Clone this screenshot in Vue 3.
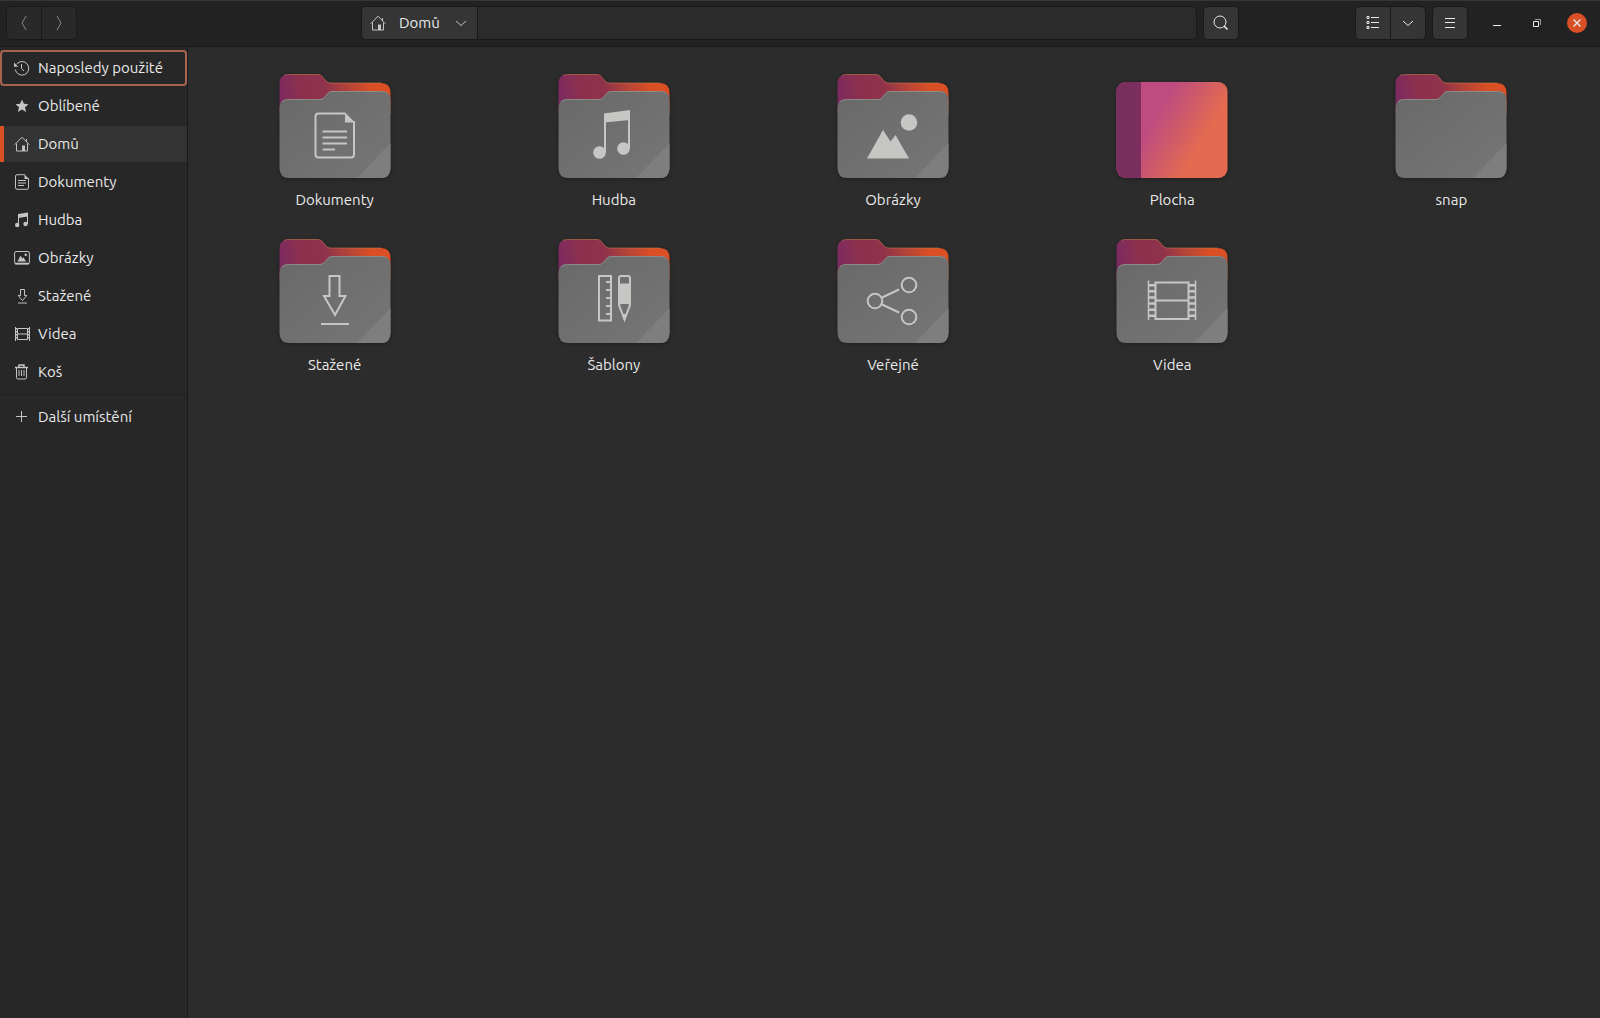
<template>
  <div class="window">
    <header class="headerbar">
      <div class="linked">
        <button class="btn dim" type="button" aria-label="Zpět">
          <svg width="16" height="16" viewBox="0 0 16 16"><path d="M10 1 6 8l4 7" /></svg>
        </button>
        <button class="btn dim" type="button" aria-label="Vpřed">
          <svg width="16" height="16" viewBox="0 0 16 16"><path d="M6 1l4 7-4 7" /></svg>
        </button>
      </div>

      <div class="location">
        <div class="pathbar">
          <button class="crumb" type="button">
            <svg width="16" height="16" viewBox="0 0 16 16" v-html="icons.home"></svg>
            <span>Domů</span>
            <svg width="16" height="16" viewBox="0 0 16 16"><path d="M3 6l5 4.500 5-4.500" /></svg>
          </button>
        </div>
        <button class="btn single" type="button" aria-label="Hledat">
          <svg width="16" height="16" viewBox="0 0 16 16">
            <circle cx="7" cy="7" r="6" />
            <path d="M11 11 14.500 14.500" stroke-width="1.6" />
          </svg>
        </button>
      </div>

      <div class="actions">
        <div class="linked">
          <button class="btn" type="button" aria-label="Seznam">
            <svg width="16" height="16" viewBox="0 0 16 16">
              <path d="M6 2.500h8M6 7.500h8M6 12.500h8" />
              <path d="M2 1.500h2v2H2zM2 6.500h2v2H2zM2 11.500h2v2H2z" />
            </svg>
          </button>
          <button class="btn" type="button" aria-label="Možnosti zobrazení">
            <svg width="16" height="16" viewBox="0 0 16 16"><path d="M3 6l5 4.500 5-4.500" /></svg>
          </button>
        </div>
        <button class="btn single" type="button" aria-label="Nabídka">
          <svg width="16" height="16" viewBox="0 0 16 16"><path d="M3 3.500h10M3 7.500h10M3 12.500h10" /></svg>
        </button>
        <div class="controls">
          <button class="control" type="button" aria-label="Minimalizovat">
            <svg width="16" height="16" viewBox="0 0 16 16"><path d="M4 10.500h8" /></svg>
          </button>
          <button class="control" type="button" aria-label="Obnovit">
            <svg width="16" height="16" viewBox="0 0 16 16">
              <path d="M4.500 6.500h5v5h-5z" />
              <path d="M6 4.500h5.500V10" opacity="0.6" />
            </svg>
          </button>
          <button class="control close" type="button" aria-label="Zavřít">
            <svg width="16" height="16" viewBox="0 0 16 16"><path d="M4.500 4.500l7 7M11.500 4.500l-7 7" stroke-width="1.4" /></svg>
          </button>
        </div>
      </div>
    </header>

    <div class="body">
      <nav class="sidebar">
        <a
          v-for="place in places"
          :key="place.label"
          href="#"
          :class="['place', { focused: place.focused, active: place.active }]"
        >
          <svg width="16" height="16" viewBox="0 0 16 16" v-html="icons[place.icon]"></svg>
          <span>{{ place.label }}</span>
        </a>
        <hr class="separator" />
        <a class="place" href="#">
          <svg width="16" height="16" viewBox="0 0 16 16"><path d="M7.500 2v11M2 7.500h11" /></svg>
          <span>Další umístění</span>
        </a>
      </nav>

      <main class="files">
        <a v-for="item in items" :key="item.label" class="file" href="#">
          <svg class="folder" width="112" height="104" viewBox="0 0 112 104">
            <g v-if="item.desktop">
              <rect x="0.500" y="8" width="111" height="96" rx="9" fill="url(#desk)" />
              <path d="M25 8H9.500a9 9 0 0 0-9 9v78a9 9 0 0 0 9 9H25z" fill="#7b2f5e" />
            </g>
            <g v-else>
              <path
                d="M.5 40V9.500Q.5.500 9.500.500H39q2.500 0 4 1.700l4 4.800q2 2 4.500 2H102q9.500 0 9.500 10v21z"
                fill="url(#back)"
              />
              <path d="M5 1.500q2-1 4.500-1H39q2.500 0 4 1.700l4 4.800q2 2 4.500 2H102" stroke="#c9784f" opacity="0.6" fill="none" />
              <path
                d="M.5 34q0-9 9-9H41q2.500 0 4.200-1.800l3.600-4.200q1.800-2 4.200-2h49q9.500 0 9.500 9v68q0 10-10 10H10.500q-10 0-10-10z"
                fill="url(#front)"
              />
              <path d="M111.500 69v25q0 10-10 10H78z" fill="#7e7e7e" />
              <path d="M3 28q2.500-2.500 6.500-2.500H41q2.500 0 4.200-1.800l3.600-4.200q1.800-2 4.200-2h49q4 0 6.500 2" stroke="#8e8a86" fill="none" />
            </g>
            <g v-if="item.emblem" class="emblem" v-html="emblems[item.emblem]"></g>
          </svg>
          <span class="name">{{ item.label }}</span>
        </a>
      </main>
    </div>

    <svg class="defs" width="0" height="0" aria-hidden="true">
      <defs>
        <linearGradient id="back" gradientUnits="userSpaceOnUse" x1="0" y1="24" x2="112" y2="4">
          <stop offset="0" stop-color="#7a2a62" />
          <stop offset="0.2" stop-color="#8c304e" />
          <stop offset="0.42" stop-color="#8f324b" />
          <stop offset="0.62" stop-color="#b54438" />
          <stop offset="0.82" stop-color="#da4f24" />
          <stop offset="1" stop-color="#da4f24" />
        </linearGradient>
        <linearGradient id="front" x1="0" y1="0" x2="1" y2="1">
          <stop offset="0" stop-color="#696969" />
          <stop offset="1" stop-color="#767676" />
        </linearGradient>
        <linearGradient id="desk" gradientUnits="userSpaceOnUse" x1="34" y1="38" x2="92" y2="72">
          <stop offset="0.1" stop-color="#be4c80" />
          <stop offset="0.5" stop-color="#cf5b68" />
          <stop offset="0.9" stop-color="#e46b50" />
        </linearGradient>
      </defs>
    </svg>
  </div>
</template>

<script setup>
// 16px symbolic icons, stroked by default
const icons = {
  recent:
    '<path d="M2.600 4.200A6.800 6.800 0 1 1 1.300 9.500"/><path d="M7.500 4v4.500l2.500 2.500"/><path class="solid" d="M0 2.500v4.200h4.200z"/>',
  star: '<path class="solid" d="M8 1.500l1.900 4.300 4.600.4-3.500 3.100 1.100 4.600L8 11.500l-4.100 2.400L5 9.300 1.500 6.200l4.600-.4z"/>',
  home: '<path d="M.700 8.700 8 1.200l7.300 7.500M2.500 7.500v7.500h11V7.500M12.500 3v3"/><path class="solid" d="M8 9.500h3V15H8z"/>',
  document:
    '<path d="M11 .7H3Q1.500.7 1.500 2.200v11.600q0 1.500 1.500 1.500h10q1.500 0 1.500-1.500V4.500"/><path d="M4 6.500h8M4 9h8M4 11.500h6"/><path class="solid" d="M10.500.5v4.500H15z"/>',
  music:
    '<path class="solid" d="M4 2 14 .5v4L4 6z"/><path d="M4.500 3v10M13.500 2v10"/><circle class="solid" cx="3.200" cy="13" r="2.200"/><circle class="solid" cx="11.500" cy="12" r="2.200"/>',
  image:
    '<rect x=".6" y="1.500" width="14.800" height="12.500" rx="1.500"/><path d="M1 13.500h14" stroke-width="1.600"/><path class="solid" d="M3.500 11.500l3-6 2 3 1-1.200 2.500 4.200z"/><circle class="solid" cx="11.700" cy="4.700" r="1.200"/>',
  download: '<path d="M6.500 1.500h4v6h2.300L8.500 12.500 4.200 7.500h2.300z"/><path d="M4 15h9"/>',
  video:
    '<path d="M3.500 2.500h10v11h-10zM3.500 8h10"/><path d="M1.500 1v14M15.500 1v14"/><path d="M2.500 2v12M14.500 2v12" stroke-dasharray="1.500 1.500"/>',
  trash:
    '<path d="M1 3.500h13M5 3V1h5v2" stroke-width="1.400"/><path d="M2.500 4v9.500q0 1.500 1.500 1.500h7q1.500 0 1.500-1.500V4M5 6v6M7.500 6v6M10 6v6"/>',
};

// Large glyphs on the folder fronts, in 112x104 folder coordinates
const emblems = {
  document:
    '<path d="M66 39.500H39.500q-3 0-3 3v38q0 3 3 3h32.500q3 0 3-3V47"/><path d="M43.500 57.500H68M43.500 63.500H68M43.500 69.500H68M43.500 75.500H56"/><path class="solid" d="M66 38.500v10h10z"/>',
  music:
    '<path class="solid" d="M46 39.500 72 36v10L46 48.500z"/><path d="M47 40v39M71 38v37"/><circle class="solid" cx="41.500" cy="78.500" r="6.300"/><circle class="solid" cx="65.500" cy="74.500" r="6.300"/>',
  image:
    '<circle class="solid" cx="72" cy="48.500" r="8.300"/><path class="solid" d="M30 84.500 46 56l7.500 11.500L58.500 61 72 84.500z"/>',
  download: '<path d="M50.500 37h10v20h6L56 76 45 57h5.500z"/><path d="M42 85h28"/>',
  template:
    '<path d="M41 37h12v44.500H41z"/><path d="M48 43h4M48 51h4M48 59h4M48 67h4M48 75h4"/><path d="M61 39q0-2 2-2h7q2 0 2 2v27l-5.500 14.500L61 66z"/><path class="solid" d="M61 44.500h11V66l-2.500-1h-6L61 66zM64 75h5l-2.500 8z"/>',
  share:
    '<circle cx="38" cy="62" r="7.300"/><circle cx="72" cy="46" r="7.300"/><circle cx="72" cy="78" r="7.300"/><path d="M45 58.500 62 50.500M45 65.500 62 73.500"/>',
  video:
    '<path d="M39.500 43.500h33v36.500h-33zM39.500 61.500h33"/><path d="M32.500 41.500v39.500M79.500 41.500v39.500" stroke-width="1.500"/><path d="M36 45v34M76 45v34" stroke-width="6" stroke-dasharray="2.500 3.600"/>',
};

const places = [
  { icon: "recent", label: "Naposledy použité", focused: true },
  { icon: "star", label: "Oblíbené" },
  { icon: "home", label: "Domů", active: true },
  { icon: "document", label: "Dokumenty" },
  { icon: "music", label: "Hudba" },
  { icon: "image", label: "Obrázky" },
  { icon: "download", label: "Stažené" },
  { icon: "video", label: "Videa" },
  { icon: "trash", label: "Koš" },
];

const items = [
  { label: "Dokumenty", emblem: "document" },
  { label: "Hudba", emblem: "music" },
  { label: "Obrázky", emblem: "image" },
  { label: "Plocha", desktop: true },
  { label: "snap" },
  { label: "Stažené", emblem: "download" },
  { label: "Šablony", emblem: "template" },
  { label: "Veřejné", emblem: "share" },
  { label: "Videa", emblem: "video" },
];
</script>

<style>
body {
  margin: 0;
  background: #2c2c2c;
}
</style>

<style scoped>
.window {
  display: flex;
  flex-direction: column;
  min-height: 100vh;
  background: #2c2c2c;
  color: #eaeaea;
  font-family: Ubuntu, "Noto Sans", "Open Sans", sans-serif;
  font-size: 15px;
  line-height: 20px;
}

svg {
  flex: none;
  fill: none;
  stroke: currentColor;
}

svg :deep(.solid) {
  fill: currentColor;
  stroke: none;
}

button {
  margin: 0;
  padding: 0;
  font: inherit;
  color: inherit;
}

.headerbar {
  display: grid;
  grid-template-columns: 1fr minmax(0, 878px) 1fr;
  align-items: start;
  box-sizing: border-box;
  height: 47px;
  padding: 5px 6px 0;
  background: #222;
  border-top: 1px solid #363636;
  border-bottom: 1px solid #191919;
}

.linked {
  display: flex;
}

.btn {
  display: flex;
  align-items: center;
  justify-content: center;
  box-sizing: border-box;
  width: 36px;
  height: 34px;
  background: #353535;
  border: 1px solid #191919;
}

.linked .btn:first-child {
  border-radius: 5px 0 0 5px;
}

.linked .btn:last-child {
  margin-left: -1px;
  border-radius: 0 5px 5px 0;
}

.btn.dim {
  background: #292929;
  color: #858585;
}

.btn.single {
  border-radius: 5px;
}

.location {
  display: flex;
  gap: 6px;
}

.pathbar {
  display: flex;
  flex: 1;
  box-sizing: border-box;
  height: 34px;
  background: #2b2b2b;
  border: 1px solid #191919;
  border-radius: 5px;
  overflow: hidden;
}

.crumb {
  display: flex;
  align-items: center;
  gap: 13px;
  padding: 0 8px;
  background: #353535;
  border: none;
  border-right: 1px solid #191919;
}

.crumb svg {
  color: #c4c4c4;
}

.actions {
  display: flex;
  align-items: center;
  justify-content: flex-end;
  gap: 6px;
  padding-right: 7px;
}

.controls {
  display: flex;
  gap: 20px;
  margin-left: 13px;
}

.control {
  display: flex;
  align-items: center;
  justify-content: center;
  width: 20px;
  height: 20px;
  background: none;
  border: none;
  border-radius: 50%;
}

.control.close {
  background: #d94f26;
}

.body {
  display: flex;
  flex: 1;
}

.sidebar {
  display: flex;
  flex-direction: column;
  gap: 2px;
  box-sizing: border-box;
  width: 188px;
  padding-top: 3px;
  background: #272727;
  border-right: 1px solid #191919;
}

.place {
  display: flex;
  align-items: center;
  gap: 8px;
  box-sizing: border-box;
  height: 36px;
  padding-left: 14px;
  color: inherit;
  text-decoration: none;
  white-space: nowrap;
}

.place svg {
  color: #c4c4c4;
}

.place.focused {
  padding-left: 12px;
  border: 2px solid #a8634f;
  border-radius: 4px;
}

.place.active {
  padding-left: 10px;
  background: #333;
  border-left: 4px solid #d94f26;
}

.separator {
  width: 100%;
  height: 1px;
  margin: 2px 0;
  background: #202020;
  border: none;
}

.files {
  display: grid;
  flex: 1;
  grid-template-columns: repeat(5, 1fr);
  align-content: start;
  gap: 29px 0;
  padding: 27px 9px 27px 7px;
}

.file {
  display: flex;
  flex-direction: column;
  align-items: center;
  gap: 12px;
  color: inherit;
  text-decoration: none;
}

.folder {
  stroke: none;
  filter: drop-shadow(0 1px 2px rgba(0, 0, 0, 0.3));
}

.emblem {
  color: #c6c6c4;
  stroke: currentColor;
  stroke-width: 2;
}

.defs {
  position: absolute;
}
</style>
